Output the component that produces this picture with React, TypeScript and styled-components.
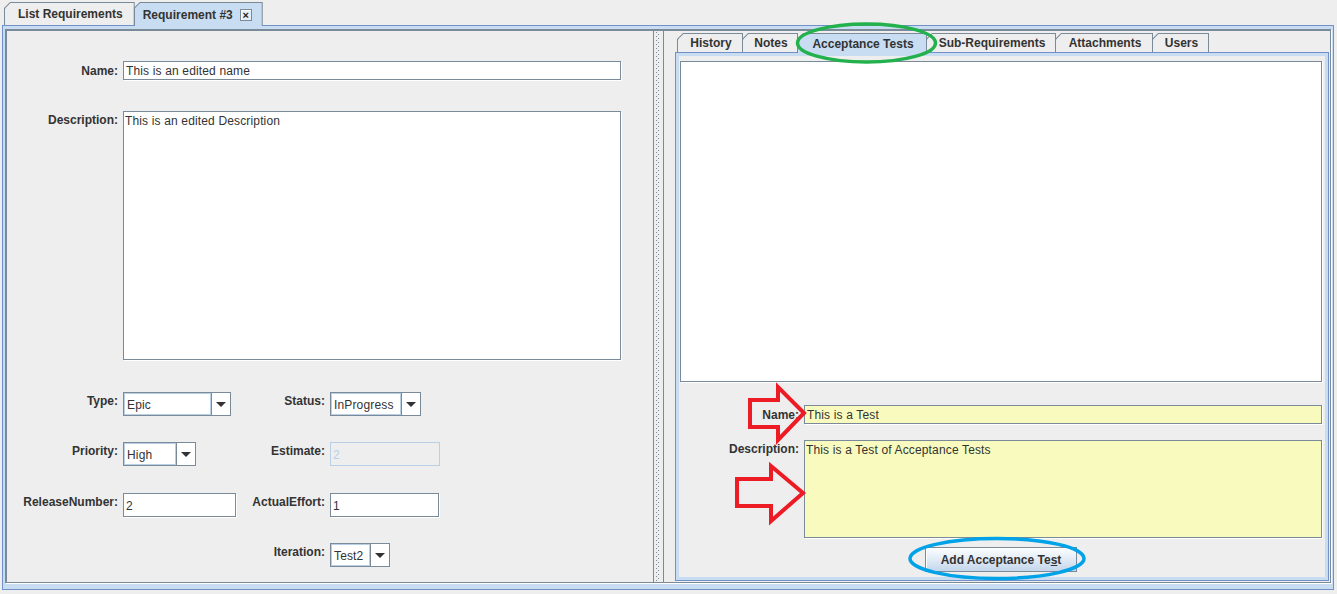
import React from "react";
import styled, { createGlobalStyle } from "styled-components";

const C = {
  bg: "#eeeeee",
  gray: "#7a8a99",
  band: "#c8ddf2",
  blue: "#7291c9",
  text: "#333333",
  light: "#b8cfe5",
  yellow: "#f8fbbd",
};

const Global = createGlobalStyle`
  html, body { margin: 0; padding: 0; background: ${C.bg}; }
  body {
    font-family: "Liberation Sans", Arial, sans-serif;
    font-size: 12px;
    color: ${C.text};
    overflow: hidden;
  }
  * { box-sizing: border-box; }
`;

const Window = styled.div`
  position: relative;
  width: 1337px;
  height: 594px;
  background: ${C.bg};
  display: flex;
  flex-direction: column;
`;

const TabStrip = styled.div<{ $h: number; $pl: number }>`
  flex: none;
  height: ${(p) => p.$h}px;
  display: flex;
  align-items: flex-end;
  padding-left: ${(p) => p.$pl}px;
`;

const TabShell = styled.div<{ $selected?: boolean; $h: number; $w?: number }>`
  position: relative;
  z-index: ${(p) => (p.$selected ? 2 : 1)};
  width: ${(p) => (p.$w ? `${p.$w + 1}px` : "auto")};
  height: ${(p) => p.$h + (p.$selected ? 1 : 0)}px;
  margin-bottom: ${(p) => (p.$selected ? -1 : 0)}px;
  margin-right: -1px;
  padding: 1px 1px 0 1px;
  background: ${C.gray};
  clip-path: polygon(6px 0, 100% 0, 100% 100%, 0 100%, 0 6px);
`;

const TabFace = styled.div<{ $selected?: boolean; $pad: string; $center?: boolean }>`
  height: 100%;
  display: flex;
  align-items: center;
  justify-content: ${(p) => (p.$center ? "center" : "flex-start")};
  gap: 7px;
  padding: ${(p) => p.$pad};
  background: ${(p) => (p.$selected ? C.band : C.bg)};
  clip-path: polygon(5.4px 0, 100% 0, 100% 100%, 0 100%, 0 5.4px);
  font-weight: bold;
  font-size: 12px;
  white-space: nowrap;
  color: ${C.text};
`;

const CloseBox = styled.span`
  width: 12px;
  height: 12px;
  border: 1px solid ${C.gray};
  box-shadow: inset 1px 1px 0 #fff;
  background: #e8eef6;
  display: flex;
  align-items: center;
  justify-content: center;
  font-size: 11px;
  line-height: 10px;
  font-weight: bold;
  color: #222;
`;

const TabBody = styled.div`
  flex: none;
  height: 565px;
  margin: 0 3px 0 2px;
  border: 1px solid ${C.blue};
  background: ${C.band};
  padding: 3px 2px 6px 2px;
  display: flex;
`;

const SplitPane = styled.div`
  flex: 1;
  display: flex;
  background: ${C.bg};
  border-top: 2px solid ${C.gray};
  border-left: 2px solid ${C.gray};
  border-right: 1px solid ${C.gray};
  border-bottom: 1px solid ${C.gray};
  box-shadow: 1px 1px 0 #fff;
`;

const LeftPane = styled.div`
  flex: none;
  width: 647px;
  border-right: 1px solid ${C.gray};
  padding-top: 30px;
  display: flex;
  flex-direction: column;
`;

const Divider = styled.div`
  flex: none;
  width: 10px;
  border-right: 1px solid ${C.gray};
  padding: 1px 3px 1px 2px;
  display: flex;
`;

const Bumps = styled.div`
  flex: 1;
  background-image: conic-gradient(from 270deg at 1px 1px, ${C.gray} 90deg, transparent 0),
    conic-gradient(from 270deg at 1px 1px, ${C.gray} 90deg, transparent 0);
  background-size: 4px 4px, 4px 4px;
  background-position: 0 0, 2px 2px;
`;

const RightPane = styled.div`
  flex: 1;
  display: flex;
  flex-direction: column;
  padding: 2px 1px 1px 11px;
`;

const InnerTabContent = styled.div`
  flex: 1;
  border: 1px solid ${C.blue};
  background: ${C.band};
  padding: 3px;
  display: flex;
`;

const AccPanel = styled.div`
  flex: 1;
  background: ${C.bg};
  padding: 5px 3px 0 1px;
  display: flex;
  flex-direction: column;
`;

const ListArea = styled.div`
  flex: none;
  height: 321px;
  background: #fff;
  border: 1px solid ${C.gray};
  box-shadow: 1px 1px 0 #fff;
`;

const FormRow = styled.div<{ $top: number; $cols: string }>`
  display: grid;
  grid-template-columns: ${(p) => p.$cols};
  column-gap: 5px;
  align-items: start;
  margin-top: ${(p) => p.$top}px;
`;

const Label = styled.div<{ $pt?: number }>`
  text-align: right;
  font-weight: bold;
  font-size: 12px;
  line-height: 15px;
  padding-top: ${(p) => p.$pt ?? 2}px;
  white-space: nowrap;
  color: ${C.text};
`;

const TextField = styled.div<{ $w?: number; $h: number; $span?: boolean; $yellow?: boolean }>`
  width: ${(p) => (p.$w ? `${p.$w}px` : "auto")};
  height: ${(p) => p.$h}px;
  grid-column: ${(p) => (p.$span ? "2 / -1" : "auto")};
  background: ${(p) => (p.$yellow ? C.yellow : "#fff")};
  border: 1px solid ${C.gray};
  box-shadow: 1px 1px 0 #fff;
  padding: 1px 2px 0 2px;
  display: flex;
  align-items: center;
  font-size: 12px;
  letter-spacing: 0.15px;
  color: ${C.text};
  white-space: nowrap;
`;

const DisabledField = styled.div<{ $w: number }>`
  width: ${(p) => p.$w}px;
  height: 24px;
  border: 1px solid ${C.light};
  background: ${C.bg};
  padding: 1px 2px 0 2px;
  display: flex;
  align-items: center;
  color: ${C.light};
  font-size: 12px;
`;

const TextArea = styled.div<{ $h: number; $span?: boolean; $yellow?: boolean }>`
  height: ${(p) => p.$h}px;
  grid-column: ${(p) => (p.$span ? "2 / -1" : "auto")};
  background: ${(p) => (p.$yellow ? C.yellow : "#fff")};
  border: 1px solid ${C.gray};
  box-shadow: 1px 1px 0 #fff;
  padding: 2px 1px 0 1px;
  line-height: 15px;
  font-size: 12px;
  letter-spacing: 0.15px;
  color: ${C.text};
`;

const Combo = styled.div<{ $w: number }>`
  width: ${(p) => p.$w}px;
  height: 24px;
  display: flex;
  border: 1px solid ${C.gray};
  background: #fff;
`;

const ComboValue = styled.div`
  flex: 1;
  border: 1px solid ${C.light};
  padding: 1px 2px 0 2px;
  display: flex;
  align-items: center;
  font-size: 12px;
  letter-spacing: 0.15px;
  color: ${C.text};
  white-space: nowrap;
`;

const ComboArrow = styled.div`
  flex: none;
  width: 19px;
  border-left: 1px solid ${C.gray};
  display: flex;
  align-items: center;
  justify-content: center;
  &::after {
    content: "";
    border-left: 5px solid transparent;
    border-right: 5px solid transparent;
    border-top: 5px solid #333;
  }
`;

const ButtonRow = styled.div`
  display: flex;
  justify-content: center;
  margin-top: 9px;
`;

const Button = styled.div`
  height: 25px;
  padding: 0 15px;
  border: 1px solid ${C.gray};
  box-shadow: inset 1px 1px 0 #fff;
  background: linear-gradient(#fbfdff 0%, #e4edf6 45%, #c3d6ec 100%);
  display: flex;
  align-items: center;
  font-weight: bold;
  font-size: 12px;
  color: ${C.text};
  white-space: nowrap;
  u { text-decoration: underline; }
`;

const Overlay = styled.svg`
  position: absolute;
  left: 0;
  top: 0;
  pointer-events: none;
  z-index: 10;
`;

const LEFT_COLS = "111px 113px 84px 291px";
const RIGHT_COLS = "119px 1fr";

function Select({ w, value }: { w: number; value: string }) {
  return (
    <Combo $w={w}>
      <ComboValue>{value}</ComboValue>
      <ComboArrow />
    </Combo>
  );
}

const rightTabs = [
  { t: "History", w: 65 },
  { t: "Notes", w: 55 },
  { t: "Acceptance Tests", w: 129 },
  { t: "Sub-Requirements", w: 129 },
  { t: "Attachments", w: 97 },
  { t: "Users", w: 56 },
];

export default function App() {
  return (
    <>
      <Global />
      <Window>
        <TabStrip $h={25} $pl={4}>
          <TabShell $h={23}>
            <TabFace $pad="0 11px 0 13px">List Requirements</TabFace>
          </TabShell>
          <TabShell $h={23} $selected>
            <TabFace $selected $pad="0 10px 0 8px">
              Requirement #3
              <CloseBox>×</CloseBox>
            </TabFace>
          </TabShell>
        </TabStrip>
        <TabBody>
          <SplitPane>
            <LeftPane>
              <FormRow $top={0} $cols={LEFT_COLS}>
                <Label $pt={3}>Name:</Label>
                <TextField $h={19} $span>This is an edited name</TextField>
              </FormRow>
              <FormRow $top={31} $cols={LEFT_COLS}>
                <Label $pt={2}>Description:</Label>
                <TextArea $h={249} $span>This is an edited Description</TextArea>
              </FormRow>
              <FormRow $top={32} $cols={LEFT_COLS}>
                <Label>Type:</Label>
                <Select w={108} value="Epic" />
                <Label>Status:</Label>
                <Select w={91} value="InProgress" />
              </FormRow>
              <FormRow $top={26} $cols={LEFT_COLS}>
                <Label>Priority:</Label>
                <Select w={73} value="High" />
                <Label>Estimate:</Label>
                <DisabledField $w={110}>2</DisabledField>
              </FormRow>
              <FormRow $top={27} $cols={LEFT_COLS}>
                <Label>ReleaseNumber:</Label>
                <TextField $w={113} $h={24}>2</TextField>
                <Label>ActualEffort:</Label>
                <TextField $w={109} $h={24}>1</TextField>
              </FormRow>
              <FormRow $top={26} $cols={LEFT_COLS}>
                <div />
                <div />
                <Label>Iteration:</Label>
                <Select w={60} value="Test2" />
              </FormRow>
            </LeftPane>
            <Divider>
              <Bumps />
            </Divider>
            <RightPane>
              <TabStrip $h={19} $pl={2}>
                {rightTabs.map(({ t, w }) => (
                  <TabShell key={t} $h={19} $w={w} $selected={t === "Acceptance Tests"}>
                    <TabFace $selected={t === "Acceptance Tests"} $pad="0 0 0 2px" $center>
                      {t}
                    </TabFace>
                  </TabShell>
                ))}
              </TabStrip>
              <InnerTabContent>
                <AccPanel>
                  <ListArea />
                  <FormRow $top={23} $cols={RIGHT_COLS}>
                    <Label $pt={3}>Name:</Label>
                    <TextField $h={19} $yellow>This is a Test</TextField>
                  </FormRow>
                  <FormRow $top={16} $cols={RIGHT_COLS}>
                    <Label $pt={2}>Description:</Label>
                    <TextArea $h={98} $yellow>This is a Test of Acceptance Tests</TextArea>
                  </FormRow>
                  <ButtonRow>
                    <Button>
                      <span>
                        Add Acceptance Te<u>s</u>t
                      </span>
                    </Button>
                  </ButtonRow>
                </AccPanel>
              </InnerTabContent>
            </RightPane>
          </SplitPane>
        </TabBody>
        <Overlay width={1337} height={594} viewBox="0 0 1337 594">
          <ellipse cx={866.5} cy={43} rx={69} ry={19} fill="none" stroke="#22b14c" strokeWidth={3.5} />
          <ellipse cx={997} cy={558.5} rx={87} ry={20} fill="none" stroke="#00a2e8" strokeWidth={3.5} />
          <polygon
            points="750,400 778,400 778,387 804,413 778,440 778,427 750,427"
            fill="none"
            stroke="#ed1c24"
            strokeWidth={4}
            strokeLinejoin="miter"
          />
          <polygon
            points="737,479 771,479 771,466 803,493 771,521 771,506 737,506"
            fill="none"
            stroke="#ed1c24"
            strokeWidth={4}
            strokeLinejoin="miter"
          />
        </Overlay>
      </Window>
    </>
  );
}
